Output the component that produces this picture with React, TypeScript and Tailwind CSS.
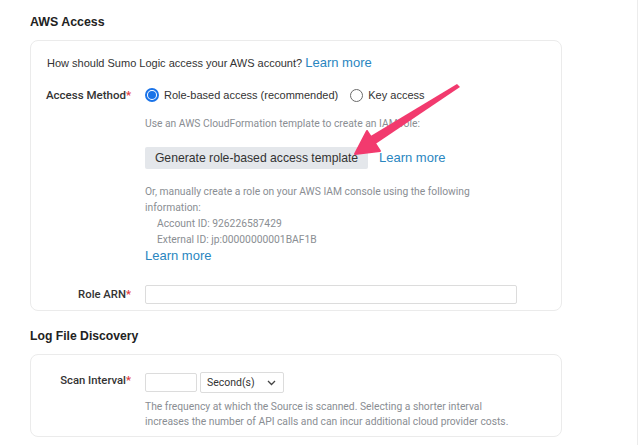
import React from 'react'

const sans = { fontFamily: '"Liberation Sans", Arial, sans-serif' }
const roboto = { fontFamily: 'Roboto, "Liberation Sans", sans-serif' }

function Req() {
  return <span className="text-[#e0383e]">*</span>
}

function LearnMore({ className = '' }: { className?: string }) {
  return <a className={`text-[13px] leading-4 text-[#2a86bf] ${className}`}>Learn more</a>
}

function Radio({ checked }: { checked?: boolean }) {
  return checked ? (
    <span className="flex h-[14px] w-[14px] shrink-0 items-center justify-center rounded-full border-2 border-[#1a73e8] bg-white">
      <span className="h-[8px] w-[8px] rounded-full bg-[#1a73e8]" />
    </span>
  ) : (
    <span className="block h-[13px] w-[13px] shrink-0 rounded-full border border-[#6b6b6b] bg-white" />
  )
}

function Arrow() {
  // tail (458,85) -> tip (355,153)
  return (
    <svg className="pointer-events-none absolute left-0 top-0" width="640" height="445">
      <polygon points="457,84 460,87 374,145 369,137" fill="#f23a6e" />
      <polygon points="355,154 367,131 380,151" fill="#f23a6e" strokeLinejoin="round" stroke="#f23a6e" strokeWidth="2" />
    </svg>
  )
}

export default function App() {
  return (
    <div className="relative h-[445px] w-[640px] overflow-hidden bg-white text-[#333]" style={sans}>
      <div className="h-full w-[638px] border-r border-[#ececec] pl-[30px]">
        <h2 className="pt-[14px] text-[12.4px] font-bold leading-4 text-[#222]">AWS Access</h2>

        <div className="mt-[10px] w-[532px] rounded-lg border border-[#ebebeb] px-[16px] pb-[6px] pt-[14px]">
          <p className="text-[11px] leading-4">
            How should Sumo Logic access your AWS account? <LearnMore />
          </p>

          <div className="mt-[16px] flex">
            <div className="flex w-[84px] justify-end whitespace-nowrap text-[11.5px] font-medium leading-4" style={roboto}>
              <span>
                Access Method<Req />
              </span>
            </div>
            <div className="ml-[14px] flex flex-col">
              <div className="flex items-center text-[11px] leading-4">
                <Radio checked />
                <span className="ml-[5px]">Role-based access (recommended)</span>
                <span className="ml-[12px]">
                  <Radio />
                </span>
                <span className="ml-[5px]">Key access</span>
              </div>
              <p className="mt-[14px] text-[10.3px] leading-[14px] text-[#8a8e93]" style={roboto}>
                Use an AWS CloudFormation template to create an IAM role:
              </p>
              <div className="mt-[16px] flex items-center">
                <button className="h-[22px] w-[223px] rounded-[2px] bg-[#e4e7eb] text-[12.2px] text-[#333]">
                  Generate role-based access template
                </button>
                <LearnMore className="ml-[11px]" />
              </div>
              <div className="mt-[15px] text-[10.3px] leading-4 text-[#8a8e93]" style={roboto}>
                <p>Or, manually create a role on your AWS IAM console using the following</p>
                <p>information:</p>
                <p className="pl-[12px]">Account ID: 926226587429</p>
                <p className="pl-[12px]">External ID: jp:00000000001BAF1B</p>
              </div>
              <LearnMore />
            </div>
          </div>

          <div className="mt-[21px] flex items-center">
            <div className="w-[84px] whitespace-nowrap text-right text-[11.3px] font-medium leading-4" style={roboto}>
              Role ARN<Req />
            </div>
            <input className="ml-[14px] h-[19px] w-[372px] rounded-[2px] border border-[#dcdcdc]" />
          </div>
        </div>

        <h2 className="mt-[17px] text-[12.2px] font-bold leading-4 text-[#222]">Log File Discovery</h2>

        <div className="mt-[10px] w-[532px] rounded-lg border border-[#ebebeb] px-[16px] pb-[7px] pt-[17px]">
          <div className="flex">
            <div className="w-[84px] whitespace-nowrap pt-[1px] text-right text-[11.3px] font-medium leading-4" style={roboto}>
              Scan Interval<Req />
            </div>
            <div className="ml-[14px] flex flex-col">
              <div className="flex items-center">
                <input className="h-[19px] w-[52px] rounded-[2px] border border-[#dcdcdc]" />
                <div
                  className="ml-[3px] flex h-[21px] w-[84px] items-center justify-between rounded-[2px] border border-[#dcdcdc] pl-[6px] pr-[7px] text-[10.5px] text-[#333]"
                  style={roboto}
                >
                  <span>Second(s)</span>
                  <svg width="9" height="6" viewBox="0 0 9 6">
                    <path d="M1 1l3.5 3.5L8 1" fill="none" stroke="#444" strokeWidth="1.3" />
                  </svg>
                </div>
              </div>
              <div className="mt-[6px] text-[10.3px] leading-[15px] text-[#8a8e93]" style={roboto}>
                <p>The frequency at which the Source is scanned. Selecting a shorter interval</p>
                <p>increases the number of API calls and can incur additional cloud provider costs.</p>
              </div>
            </div>
          </div>
        </div>
      </div>
      <Arrow />
    </div>
  )
}
